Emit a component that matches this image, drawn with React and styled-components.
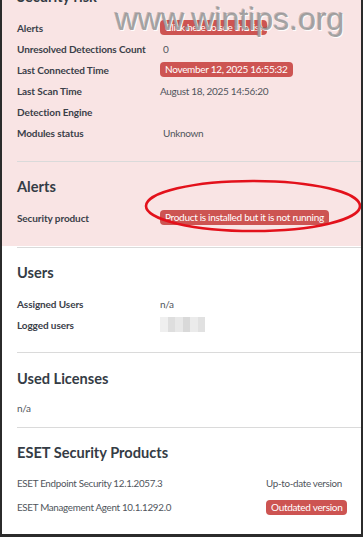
import React from "react"
import styled, { createGlobalStyle } from "styled-components"

const GlobalStyle = createGlobalStyle`
  html, body {
    margin: 0;
    padding: 0;
    background: #ffffff;
  }
  body {
    font-family: Lato, "Noto Sans", sans-serif;
  }
`

const riskRows = [
  { label: "Alerts", value: "Click here to see the list", badge: true },
  { label: "Unresolved Detections Count", value: "0", indent: true },
  { label: "Last Connected Time", value: "November 12, 2025 16:55:32", badge: true },
  { label: "Last Scan Time", value: "August 18, 2025 14:56:20" },
  { label: "Detection Engine", value: "" },
  { label: "Modules status", value: "Unknown", indent: true },
]

const pixels = ["#efefef", "#dedede", "#e8e8e8", "#d9d9d9", "#ebebeb", "#e1e1e1"]

export default function App() {
  return (
    <>
      <GlobalStyle />
      <Frame>
        <Highlight>
          <Heading $cut>Security risk</Heading>
          <Rows>
            {riskRows.map((row) => (
              <Row key={row.label}>
                <Label>{row.label}</Label>
                {row.badge ? (
                  <Value>
                    <Badge>{row.value}</Badge>
                  </Value>
                ) : (
                  <Value $indent={row.indent}>{row.value}</Value>
                )}
              </Row>
            ))}
          </Rows>
          <Divider $gap={18} />
          <Heading>Alerts</Heading>
          <Rows>
            <Row>
              <Label>Security product</Label>
              <Value>
                <Badge>Product is installed but it is not running</Badge>
              </Value>
            </Row>
          </Rows>
          <Ring viewBox="0 0 220 56">
            <ellipse cx="110" cy="27" rx="107" ry="25" fill="none" stroke="#e3111b" strokeWidth="2.6" />
          </Ring>
        </Highlight>

        <Divider $gap={1} />
        <Heading>Users</Heading>
        <Rows>
          <Row>
            <Label>Assigned Users</Label>
            <Value>n/a</Value>
          </Row>
          <Row>
            <Label>Logged users</Label>
            <Value>
              <Blur>
                {pixels.map((c, i) => (
                  <Pixel key={i} $shade={c} />
                ))}
              </Blur>
            </Value>
          </Row>
        </Rows>

        <Divider $gap={17} />
        <Heading $top={16}>Used Licenses</Heading>
        <Plain>n/a</Plain>

        <Divider $gap={8} />
        <Heading $top={15}>ESET Security Products</Heading>
        <Products>
          <Product>
            <span>ESET Endpoint Security 12.1.2057.3</span>
            <Status>Up-to-date version</Status>
          </Product>
          <Product>
            <span>ESET Management Agent 10.1.1292.0</span>
            <Status>
              <Badge>Outdated version</Badge>
            </Status>
          </Product>
        </Products>

        <Watermark>www.wintips.org</Watermark>
      </Frame>
    </>
  )
}

const Frame = styled.div`
  position: relative;
  width: 363px;
  height: 537px;
  box-sizing: border-box;
  overflow: hidden;
  border-left: 2px solid #2b2b2b;
  border-right: 2px solid #2b2b2b;
  border-bottom: 3px solid #2b2b2b;
  background: #ffffff;
  color: #3b4049;
`

const Highlight = styled.div`
  position: relative;
  margin-left: -2px;
  padding-left: 2px;
  margin-right: -2px;
  padding-right: 2px;
  background: #f9e4e4;
  padding-bottom: 18px;
`

const Heading = styled.h2`
  margin: ${(p) => (p.$cut ? "-13px" : `${p.$top || 15}px`)} 0 0 15px;
  font-size: 14.6px;
  line-height: 20px;
  font-weight: 700;
  color: #353c45;
`

const Rows = styled.div`
  display: flex;
  flex-direction: column;
  margin-top: 10px;
`

const Row = styled.div`
  display: grid;
  grid-template-columns: 143px 1fr;
  align-items: center;
  height: 21px;
  padding-left: 15px;
  font-size: 10px;
`

const Label = styled.span`
  font-weight: 700;
  color: #3b4049;
  letter-spacing: -0.1px;
`

const Value = styled.span`
  padding-left: ${(p) => (p.$indent ? "3px" : "0")};
  color: #50555c;
  letter-spacing: -0.3px;
  display: flex;
  align-items: center;
`

const Badge = styled.span`
  display: inline-block;
  background: #cd5452;
  color: #ffffff;
  font-size: 10px;
  line-height: 15px;
  letter-spacing: -0.3px;
  padding: 0 5px;
  border-radius: 4px;
  white-space: nowrap;
`

const Divider = styled.div`
  height: 1px;
  margin: ${(p) => p.$gap}px 0 0 15px;
  background: #dadada;
`

const Plain = styled.div`
  margin: 9px 0 0 15px;
  height: 21px;
  line-height: 21px;
  font-size: 10px;
  letter-spacing: -0.3px;
  color: #50555c;
`

const Products = styled.div`
  display: flex;
  flex-direction: column;
  margin-top: 8px;
`

const Product = styled.div`
  display: grid;
  grid-template-columns: 249px auto;
  align-items: center;
  height: 24px;
  padding-left: 15px;
  font-size: 9.8px;
  letter-spacing: -0.3px;
  color: #50555c;
`

const Status = styled.span`
  white-space: nowrap;
`

const Blur = styled.div`
  display: flex;
  height: 15px;
`

const Pixel = styled.span`
  width: 7.5px;
  height: 15px;
  background: ${(p) => p.$shade};
`

const Ring = styled.svg`
  position: absolute;
  left: 143px;
  top: 192px;
  width: 220px;
  height: 56px;
  overflow: visible;
`

const Watermark = styled.div`
  position: absolute;
  left: 113px;
  top: 1px;
  font-family: "Liberation Sans", Arial, sans-serif;
  font-size: 32px;
  color: rgba(150, 150, 150, 0.85);
  text-shadow: 1px 1px 0 rgba(255, 255, 255, 0.9), -1px -1px 0 rgba(90, 90, 90, 0.35);
  pointer-events: none;
`
